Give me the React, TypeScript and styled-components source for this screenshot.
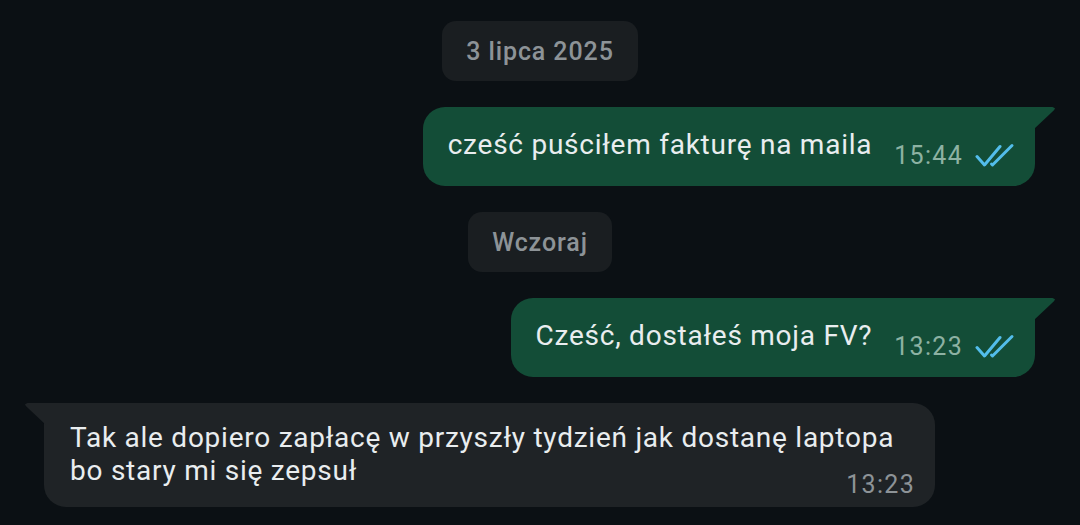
import React from 'react';
import styled, { createGlobalStyle } from 'styled-components';

const GlobalStyle = createGlobalStyle`
  html, body {
    margin: 0;
    padding: 0;
    background: #0b1014;
  }
  body {
    font-family: Roboto, "Noto Sans", sans-serif;
  }
`;

const Chat = styled.div`
  width: 1080px;
  height: 525px;
  box-sizing: border-box;
  padding: 21px 25px 0 25px;
  display: flex;
  flex-direction: column;
  gap: 26px;
  overflow: hidden;
`;

const DayRow = styled.div`
  display: flex;
  justify-content: center;
`;

const DayChip = styled.div`
  height: 60px;
  padding: 0 24px;
  display: flex;
  align-items: center;
  border-radius: 14px;
  background: #1a1e21;
  color: #8d9397;
  font-size: 25px;
  font-weight: 500;
  letter-spacing: 0.9px;
`;

const Row = styled.div<{ $out: boolean }>`
  display: flex;
  justify-content: ${p => (p.$out ? 'flex-end' : 'flex-start')};
  padding: ${p => (p.$out ? '0 20px 0 0' : '0 0 0 19px')};
`;

const Bubble = styled.div<{ $out: boolean }>`
  position: relative;
  max-width: 891px;
  box-sizing: border-box;
  background: ${p => (p.$out ? '#134d37' : '#1f2326')};
  color: #e9edef;
  border-radius: ${p => (p.$out ? '22px 0 22px 22px' : '0 22px 22px 22px')};

  &::after {
    content: '';
    position: absolute;
    top: 0;
    width: 21px;
    height: 22px;
    background: inherit;
    ${p =>
      p.$out
        ? 'right: -20px; clip-path: polygon(0 0, 88% 0, 100% 6%, 96% 14%, 0 100%);'
        : 'left: -19px; clip-path: polygon(100% 0, 12% 0, 0 6%, 4% 14%, 100% 100%);'}
  }
`;

const OutBody = styled.div`
  display: flex;
  align-items: flex-end;
  height: 79px;
  padding: 0 20px 0 25px;
  box-sizing: border-box;
`;

const OutText = styled.span`
  font-size: 28px;
  letter-spacing: 0.75px;
  line-height: 79px;
  align-self: center;
  margin-bottom: 4px;
`;

const Meta = styled.span<{ $out: boolean }>`
  display: flex;
  align-items: center;
  gap: 12px;
  margin-left: ${p => (p.$out ? '22px' : '0')};
  padding-bottom: ${p => (p.$out ? '16px' : '0')};
  font-size: 25px;
  letter-spacing: 1.3px;
  color: ${p => (p.$out ? '#8db2a3' : '#8d9397')};
`;

const InBody = styled.div`
  padding: 18px 20px 7px 26px;
  display: flex;
  flex-direction: column;
`;

const InText = styled.div`
  font-size: 28px;
  letter-spacing: 0.75px;
  line-height: 33px;
`;

const InMeta = styled(Meta)`
  align-self: flex-end;
  margin-top: -17px;
  line-height: 30px;
`;

const Ticks = () => (
  <svg width="40" height="26" viewBox="0 0 40 26" fill="none">
    <path
      d="M2 13.5 L9.5 22 L25 3.5"
      stroke="#53bdeb"
      strokeWidth="3"
      strokeLinecap="round"
      strokeLinejoin="round"
    />
    <path
      d="M16.5 21 L17.5 22 L37 2.5"
      stroke="#53bdeb"
      strokeWidth="3"
      strokeLinecap="round"
      strokeLinejoin="round"
    />
  </svg>
);

const Outgoing = ({ text, time }: { text: string; time: string }) => (
  <Row $out>
    <Bubble $out>
      <OutBody>
        <OutText>{text}</OutText>
        <Meta $out>
          {time}
          <Ticks />
        </Meta>
      </OutBody>
    </Bubble>
  </Row>
);

const App = () => (
  <>
    <GlobalStyle />
    <Chat>
      <DayRow>
        <DayChip>3 lipca 2025</DayChip>
      </DayRow>
      <Outgoing text="cześć puściłem fakturę na maila" time="15:44" />
      <DayRow>
        <DayChip>Wczoraj</DayChip>
      </DayRow>
      <Outgoing text="Cześć, dostałeś moja FV?" time="13:23" />
      <Row $out={false}>
        <Bubble $out={false}>
          <InBody>
            <InText>
              Tak ale dopiero zapłacę w przyszły tydzień jak dostanę laptopa bo stary mi się zepsuł
            </InText>
            <InMeta $out={false}>13:23</InMeta>
          </InBody>
        </Bubble>
      </Row>
    </Chat>
  </>
);

export default App;
